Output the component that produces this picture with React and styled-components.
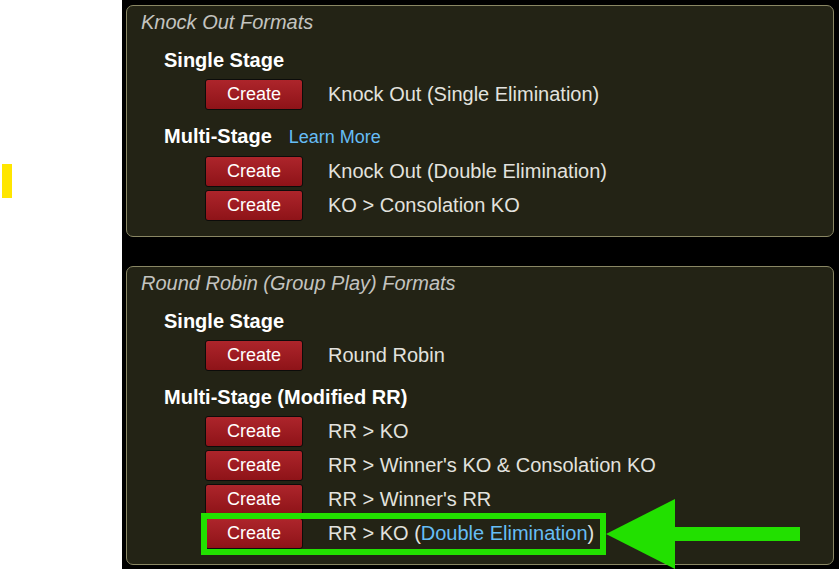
import React from "react";
import styled, { createGlobalStyle } from "styled-components";

const GlobalStyle = createGlobalStyle`
  html, body {
    margin: 0;
    padding: 0;
    background: #ffffff;
    font-family: "Liberation Sans", Arial, sans-serif;
  }
`;

const Page = styled.div`
  display: flex;
  min-height: 100vh;
`;

const Sidebar = styled.div`
  width: 122px;
  flex-shrink: 0;
  background: #ffffff;
  padding: 164px 0 0 2px;
  box-sizing: border-box;
`;

const Marker = styled.div`
  width: 10px;
  height: 34px;
  background: #ffe600;
`;

const Main = styled.div`
  flex: 1;
  background: #000000;
  padding: 5px 5px 5px 4px;
  display: flex;
  flex-direction: column;
  gap: 29px;
`;

const Panel = styled.section`
  position: relative;
  background: #232315;
  border: 1px solid #8a8764;
  border-radius: 7px;
  padding: 4px 14px 15px;
`;

const PanelTitle = styled.div`
  font-size: 20px;
  line-height: 24px;
  font-style: italic;
  color: #c4c4c0;
`;

const SectionHeading = styled.div`
  display: flex;
  align-items: baseline;
  margin: 14px 0 7px 23px;
  font-size: 20px;
  line-height: 24px;
  font-weight: bold;
  color: #ffffff;
`;

const Link = styled.span`
  color: #66bdf5;
  font-weight: normal;
  font-size: ${(p) => (p.$small ? "18px" : "inherit")};
  margin-left: ${(p) => (p.$small ? "17px" : "0")};
  cursor: pointer;
`;

const Rows = styled.div`
  display: flex;
  flex-direction: column;
  align-items: flex-start;
  gap: 3px;
  margin-left: 64px;
`;

const Row = styled.div`
  position: relative;
  display: inline-flex;
  align-items: center;
  gap: 25px;

  ${(p) =>
    p.$highlight &&
    `
    &::after {
      content: "";
      position: absolute;
      top: -5px;
      left: -4px;
      right: -12px;
      bottom: -6px;
      border: 6px solid #22e000;
      pointer-events: none;
    }
  `}
`;

const CreateButton = styled.button`
  width: 98px;
  height: 31px;
  box-sizing: border-box;
  border: 1px solid #0c0c0a;
  border-radius: 3px;
  background: linear-gradient(#ad252b, #8e1318);
  color: #ffffff;
  font-family: "Liberation Sans", Arial, sans-serif;
  font-size: 18px;
  padding: 0;
  cursor: pointer;
`;

const RowLabel = styled.span`
  font-size: 20px;
  color: #e2e2de;
`;

const Arrow = styled.svg`
  position: absolute;
  left: 479px;
  top: 232px;
  overflow: visible;
`;

const FormatRow = ({ label, highlight }) => (
  <Row $highlight={highlight}>
    <CreateButton>Create</CreateButton>
    <RowLabel>{label}</RowLabel>
  </Row>
);

export default function App() {
  return (
    <>
      <GlobalStyle />
      <Page>
        <Sidebar>
          <Marker />
        </Sidebar>
        <Main>
          <Panel>
            <PanelTitle>Knock Out Formats</PanelTitle>
            <SectionHeading>Single Stage</SectionHeading>
            <Rows>
              <FormatRow label="Knock Out (Single Elimination)" />
            </Rows>
            <SectionHeading>
              Multi-Stage <Link $small>Learn More</Link>
            </SectionHeading>
            <Rows>
              <FormatRow label="Knock Out (Double Elimination)" />
              <FormatRow label="KO > Consolation KO" />
            </Rows>
          </Panel>

          <Panel>
            <PanelTitle>Round Robin (Group Play) Formats</PanelTitle>
            <SectionHeading>Single Stage</SectionHeading>
            <Rows>
              <FormatRow label="Round Robin" />
            </Rows>
            <SectionHeading>Multi-Stage (Modified RR)</SectionHeading>
            <Rows>
              <FormatRow label="RR > KO" />
              <FormatRow label="RR > Winner's KO & Consolation KO" />
              <FormatRow label="RR > Winner's RR" />
              <FormatRow
                highlight
                label={
                  <>
                    RR &gt; KO (<Link>Double Elimination</Link>)
                  </>
                }
              />
            </Rows>
            <Arrow width="195" height="70" viewBox="0 0 195 70">
              <polygon points="0,35 69,0 69,70" fill="#22e000" />
              <rect x="68" y="28" width="126" height="14" fill="#22e000" />
            </Arrow>
          </Panel>
        </Main>
      </Page>
    </>
  );
}
